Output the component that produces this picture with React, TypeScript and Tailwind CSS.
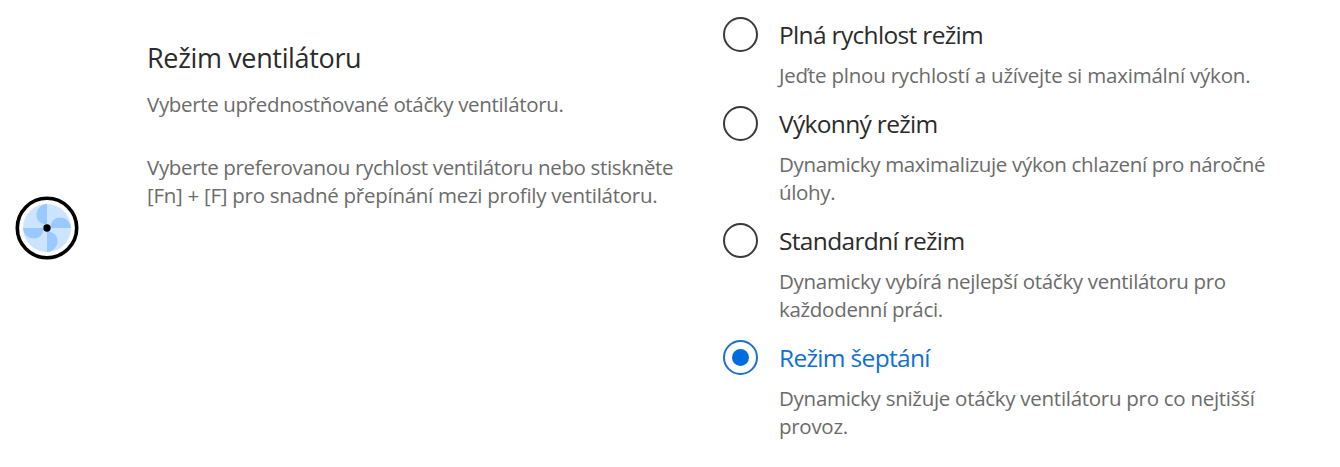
import React, { useState } from 'react';

interface FanMode {
  id: string;
  title: string;
  lines: string[];
  spacing: string;
  tracking: string;
}

const modes: FanMode[] = [
  { id: 'full', title: 'Plná rychlost režim', lines: ['Jeďte plnou rychlostí a užívejte si maximální výkon.'], spacing: 'h-[89px]', tracking: 'tracking-[-0.21px]' },
  { id: 'performance', title: 'Výkonný režim', lines: ['Dynamicky maximalizuje výkon chlazení pro náročné', 'úlohy.'], spacing: 'h-[117px]', tracking: 'tracking-[-0.33px]' },
  { id: 'standard', title: 'Standardní režim', lines: ['Dynamicky vybírá nejlepší otáčky ventilátoru pro', 'každodenní práci.'], spacing: 'h-[117px]', tracking: 'tracking-[-0.3px]' },
  { id: 'whisper', title: 'Režim šeptání', lines: ['Dynamicky snižuje otáčky ventilátoru pro co nejtišší', 'provoz.'], spacing: 'h-[110px]', tracking: 'tracking-[-0.28px]' },
];

function FanIcon() {
  return (
    <svg viewBox="0 0 64 64" className="w-16 h-16">
      <circle cx="32" cy="32" r="29.7" fill="#fff" stroke="#000" strokeWidth="3.6" />
      <circle cx="32" cy="32" r="24" fill="#cce4ff" />
      {[0, 90, 180, 270].map((angle) => (
        <path key={angle} d="M32 32 V8 C26 8.5 21.5 13 21.5 19 C21.5 25 26 28.5 32 28.5 Z" fill="#99c9ff" transform={`rotate(${angle} 32 32)`} />
      ))}
      <circle cx="32" cy="32" r="3.7" fill="#000" />
    </svg>
  );
}

export default function App() {
  const [selected, setSelected] = useState('whisper');

  return (
    <main className="flex w-[1340px] h-[467px] overflow-hidden bg-white font-['Open_Sans','Noto_Sans',sans-serif]">
      <div className="w-[147px] shrink-0 pl-[15px] pt-[196px]">
        <FanIcon />
      </div>

      <section className="w-[576px] shrink-0 pt-[40px] text-[#6b6b6b] text-[20.5px] leading-7 tracking-[-0.34px] whitespace-nowrap">
        <h1 className="text-[27px] leading-9 tracking-[-0.35px] text-[#2b2b2b]">Režim ventilátoru</h1>
        <p className="mt-[14px]">Vyberte upřednostňované otáčky ventilátoru.</p>
        <p className="mt-[35px]">Vyberte preferovanou rychlost ventilátoru nebo stiskněte</p>
        <p className="tracking-[-0.27px]">[Fn] + [F] pro snadné přepínání mezi profily ventilátoru.</p>
      </section>

      <div role="radiogroup" className="pt-[16px]">
        {modes.map((mode) => {
          const active = mode.id === selected;
          return (
            <button
              key={mode.id}
              type="button"
              role="radio"
              aria-checked={active}
              onClick={() => setSelected(mode.id)}
              className={`flex items-start gap-[21px] text-left cursor-pointer ${mode.spacing}`}
            >
              <span
                className={`w-[35px] h-[35px] mt-[0.5px] shrink-0 rounded-full border-2 flex items-center justify-center ${
                  active ? 'border-[#1f6fd0]' : 'border-[#3a3a3a]'
                }`}
              >
                {active && <span className="w-[17px] h-[17px] rounded-full bg-[#006ce0]" />}
              </span>
              <span className="block pt-px whitespace-nowrap">
                <span className={`block text-[24.5px] leading-9 tracking-[-0.67px] ${active ? 'text-[#0f6fd6]' : 'text-[#2b2b2b]'}`}>
                  {mode.title}
                </span>
                <span className={`block mt-[8px] text-[20.5px] leading-7 text-[#6b6b6b] ${mode.tracking}`}>
                  {mode.lines.map((line) => <span key={line} className="block">{line}</span>)}
                </span>
              </span>
            </button>
          );
        })}
      </div>
    </main>
  );
}
